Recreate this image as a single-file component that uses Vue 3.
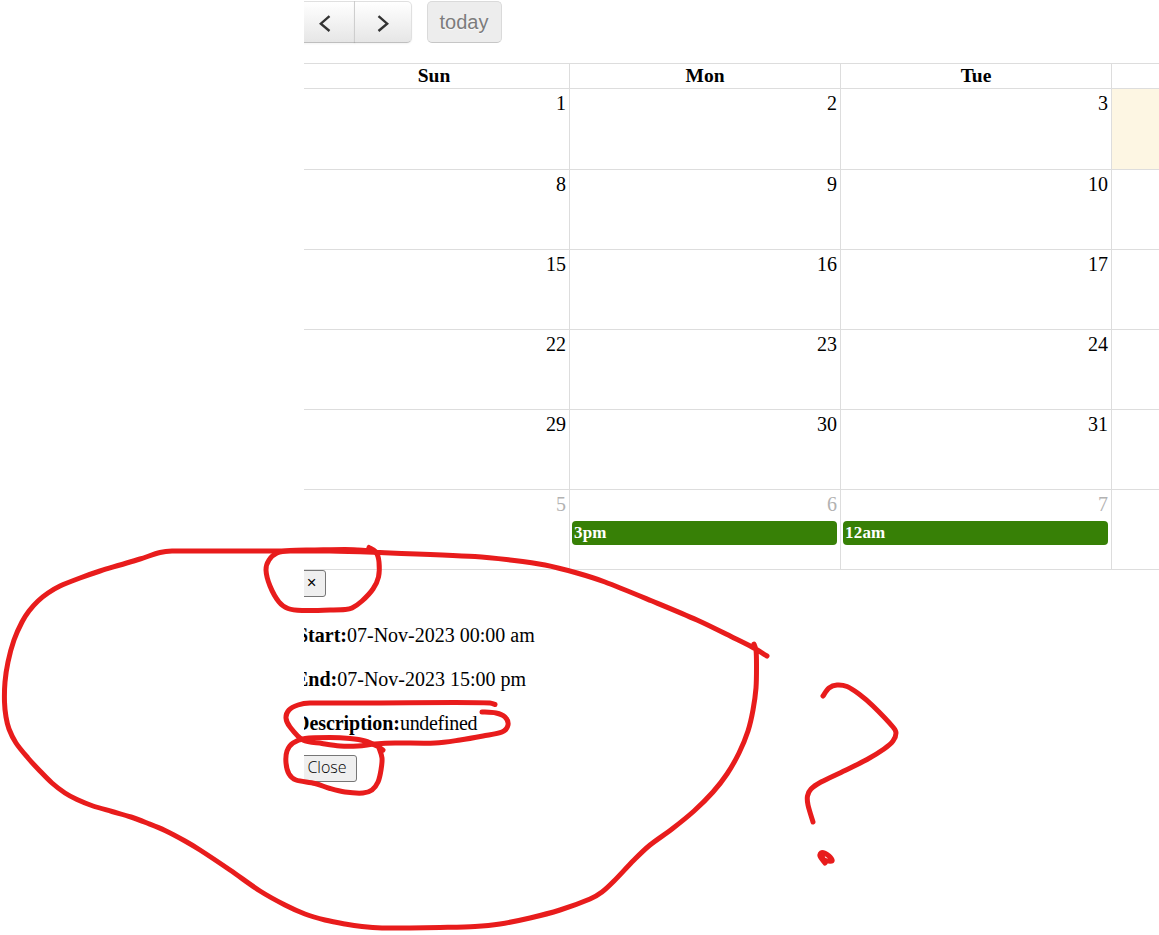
<template>
  <div class="page">
    <div class="calendar-view">
      <div class="toolbar">
        <div class="button-group">
          <button class="fc-button prev" aria-label="prev">
            <svg width="12" height="18" viewBox="0 0 12 18"><path d="M10.500 2.200 1.800 9.700l8.700 7.300" /></svg>
          </button>
          <button class="fc-button next" aria-label="next">
            <svg width="12" height="18" viewBox="0 0 12 18"><path d="M1.500 2.200 10.200 9.700 1.500 17" /></svg>
          </button>
        </div>
        <button class="fc-button today-button" disabled>today</button>
      </div>

      <div class="calendar">
        <div class="week head">
          <div v-for="(name, i) in dayNames" :key="i" class="day-name">{{ name }}</div>
        </div>
        <div v-for="(week, w) in weeks" :key="w" class="week">
          <div
            v-for="(day, d) in week"
            :key="d"
            class="day"
            :class="{ today: day.today, other: day.other }"
          >
            <span class="day-number">{{ day.number }}</span>
            <div v-if="day.event" class="event">{{ day.event }}</div>
          </div>
        </div>
      </div>

      <div class="event-details">
        <button class="plain-button dismiss">×</button>
        <p class="start"><b>Start:</b>{{ details.start }}</p>
        <p><b>End:</b>{{ details.end }}</p>
        <p class="description"><b>Description:</b>{{ details.description }}</p>
        <button class="plain-button close">Close</button>
      </div>
    </div>

    <svg class="marks" width="1159" height="935" viewBox="0 0 1159 935">
      <path v-for="(points, i) in marks" :key="i" :d="smooth(points)" />
    </svg>
  </div>
</template>

<script setup>
const dayNames = ['Sun', 'Mon', 'Tue', '']

const weeks = [
  [{ number: 1 }, { number: 2 }, { number: 3 }, { today: true }],
  [{ number: 8 }, { number: 9 }, { number: 10 }, {}],
  [{ number: 15 }, { number: 16 }, { number: 17 }, {}],
  [{ number: 22 }, { number: 23 }, { number: 24 }, {}],
  [{ number: 29 }, { number: 30 }, { number: 31 }, {}],
  [
    { number: 5, other: true },
    { number: 6, other: true, event: '3pm' },
    { number: 7, other: true, event: '12am' },
    {}
  ]
]

const details = {
  start: '07-Nov-2023 00:00 am',
  end: '07-Nov-2023 15:00 pm',
  description: 'undefined'
}

// freehand pen strokes, as the points each one passes through
const marks = [
  // big loop
  [
    [767, 656], [752, 647], [732, 637], [697, 620], [652, 601], [605, 582], [577, 573], [545, 565],
    [510, 560], [475, 556.5], [380, 552.5], [330, 551], [240, 551], [172, 551], [160, 552.5], [140, 559],
    [120, 565], [100, 571], [80, 578], [60, 586], [48, 593], [38, 601], [29, 611], [22, 622],
    [14, 640], [8, 662], [5, 682], [4.5, 702], [6, 717], [9, 729], [16, 743], [28, 758],
    [39, 770], [52, 783], [65, 793], [77, 799.5], [93, 806], [112, 811.5], [131, 817], [147, 823],
    [165, 830.5], [185, 841], [200, 850], [230, 870], [260, 891], [285, 905], [305, 914], [325, 920],
    [345, 924], [362, 926.5], [382, 928], [410, 928], [440, 927.5], [475, 926.5], [500, 924],
    [530, 918], [560, 910], [590, 899], [602, 892], [614, 881], [634, 860], [650, 845], [672, 829],
    [694, 811], [713, 792], [727, 774], [739, 753], [748, 731], [753, 710], [756, 688], [756.5, 665],
    [756, 650], [754, 644]
  ],
  // dismiss button
  [
    [369, 547.5], [376, 552], [379, 562], [378.5, 577], [373, 589], [362, 601], [352, 608], [345, 609.5],
    [330, 610], [302, 610.5], [288, 608.5], [279, 602], [270, 586], [266, 570], [269, 560], [277, 553],
    [290, 550.5], [315, 550], [345, 549.5], [358, 550], [371, 551]
  ],
  // description
  [
    [495, 704.5], [490, 703], [455, 702.5], [380, 703], [310, 703], [298, 705], [289, 710], [286, 718],
    [290, 727], [303, 740], [322, 743.5], [340, 746], [358, 746], [375, 744], [395, 743], [435, 743],
    [460, 740], [483, 736], [502, 732], [508, 725], [505, 717], [496, 713], [482, 712]
  ],
  // close button
  [
    [383, 750], [377, 746], [365, 741], [350, 738.5], [330, 737.5], [305, 738.5], [293, 743], [287, 751],
    [286, 763], [289, 774], [296, 780], [315, 783.5], [330, 788.5], [345, 792], [363, 793], [372, 790],
    [378, 782], [381, 770], [382, 758], [379, 748]
  ],
  // question mark
  [
    [823, 696], [829, 688], [837, 685], [847, 686.5], [859, 694], [873, 706], [893, 727], [896, 733],
    [893, 741], [884, 749], [867, 759.5], [845, 770.5], [821, 782], [811, 789], [807.5, 796], [808, 805], [813, 822]
  ],
  [[825, 863], [820, 856], [822, 852.5], [829, 856], [832, 861], [824, 860], [822, 855]]
]

function smooth(points) {
  let d = `M${points[0].join(' ')}`
  for (let i = 0; i < points.length - 1; i++) {
    const before = points[i - 1] || points[i]
    const from = points[i]
    const to = points[i + 1]
    const after = points[i + 2] || to
    // keep the handles short where a long segment meets a tight corner
    const length = Math.hypot(to[0] - from[0], to[1] - from[1])
    const handle = (a, b) => {
      const span = Math.hypot(b[0] - a[0], b[1] - a[1]) || 1
      const k = Math.min(1 / 6, (length * 0.35) / span)
      return [(b[0] - a[0]) * k, (b[1] - a[1]) * k]
    }
    const [ax, ay] = handle(before, to)
    const [bx, by] = handle(from, after)
    d += `C${from[0] + ax} ${from[1] + ay} ${to[0] - bx} ${to[1] - by} ${to[0]} ${to[1]}`
  }
  return d
}
</script>

<style>
body {
  margin: 0;
  background: #fff;
}
</style>

<style scoped>
.page {
  position: relative;
  width: 1159px;
  height: 935px;
  overflow: hidden;
  font-family: "Liberation Serif", "Times New Roman", serif;
  font-size: 20px;
  line-height: 22px;
  color: #000;
}

.calendar-view {
  margin-left: 304px;
  overflow: hidden;
  height: 935px;
}

.toolbar {
  display: flex;
  gap: 15px;
  margin-left: -7px;
  padding-top: 1px;
}

.button-group {
  display: flex;
}

.fc-button {
  box-sizing: border-box;
  height: 42px;
  margin: 0;
  padding: 0;
  display: flex;
  align-items: center;
  justify-content: center;
  border: 1px solid rgba(0, 0, 0, 0.12);
  border-bottom-color: rgba(0, 0, 0, 0.25);
  background: linear-gradient(#fff, #e6e6e6) padding-box;
  color: #333;
  font-family: "Liberation Sans", Arial, sans-serif;
  font-size: 20px;
  text-shadow: 0 1px 1px rgba(255, 255, 255, 0.75);
  box-shadow: inset 0 1px 0 rgba(255, 255, 255, 0.2), 0 1px 2px rgba(0, 0, 0, 0.05);
}

.fc-button svg {
  margin-top: 2px;
  fill: none;
  stroke: #333;
  stroke-width: 2.4;
}

.prev {
  width: 58px;
  padding-right: 2px;
}

.next {
  width: 58px;
  margin-left: -1px;
  border-left-color: rgba(0, 0, 0, 0.08);
  border-radius: 0 5px 5px 0;
}

.today-button {
  width: 75px;
  padding-right: 1px;
  border-radius: 5px;
  background: #ededed;
  border-color: #dadada;
  border-bottom-color: #c6c6c6;
  color: #7c7c7c;
  box-shadow: none;
}

.calendar {
  width: 1084px;
  margin: 20px 0 0 -6px;
  border-bottom: 1px solid #ddd;
}

.week {
  box-sizing: border-box;
  display: grid;
  grid-template-columns: repeat(4, 271px);
  height: 80px;
  border-top: 1px solid #ddd;
}

.week.head {
  height: 25px;
}

.week:nth-child(2) {
  height: 81px;
}

.day-name,
.day {
  box-sizing: border-box;
  border-left: 1px solid #ddd;
}

.day-name {
  padding-top: 1px;
  text-align: center;
  font-size: 19.5px;
  font-weight: bold;
}

.day {
  padding: 3px 2px 0;
  text-align: right;
}

.day-number {
  display: block;
  height: 28px;
  padding-right: 1px;
}

.day.today {
  background: #fdf6e3;
}

.day.other .day-number {
  color: #b2b2b2;
}

.event {
  box-sizing: border-box;
  height: 24px;
  margin-right: 1px;
  padding: 0 2px;
  border-radius: 4px;
  background: #378006;
  color: #fff;
  font-size: 17px;
  font-weight: bold;
  letter-spacing: 0.2px;
  line-height: 24px;
  text-align: left;
}

.event-details {
  margin-left: -9px;
}

.event-details p {
  margin: 0 0 22px;
}

.event-details .start {
  padding-left: 2px;
}

.event-details .description {
  margin-bottom: 21px;
  letter-spacing: -0.3px;
}

.description b {
  letter-spacing: -0.05px;
}

.plain-button {
  box-sizing: border-box;
  display: block;
  height: 27px;
  margin: 0;
  padding: 0;
  border: 1px solid #767676;
  border-radius: 3px;
  background: #efefef;
  color: #000;
  font-family: "Liberation Sans", Arial, sans-serif;
  font-size: 16.667px;
}

.dismiss {
  width: 31px;
  margin-bottom: 27px;
  padding: 0 0 2px 2px;
}

.close {
  width: 62px;
  padding: 0 0 3px 2px;
  font-family: "Open Sans", "Liberation Sans", sans-serif;
  font-size: 16px;
  font-weight: 300;
}

.marks {
  position: absolute;
  top: 0;
  left: 0;
  fill: none;
  stroke: #e81c1c;
  stroke-width: 5;
  stroke-linecap: round;
  stroke-linejoin: round;
  pointer-events: none;
}
</style>
